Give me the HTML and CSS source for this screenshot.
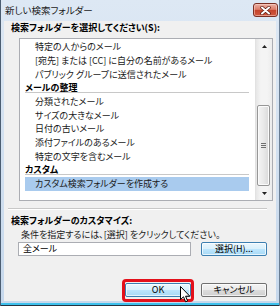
FILE: index.html
```html
<!DOCTYPE html>
<html lang="ja">
<head>
<meta charset="utf-8">
<link rel="stylesheet" href="styles.css">
</head>
<body>
<div class="window">
  <div class="titlebar">
    <span class="title">新しい検索フォルダー</span>
    <span class="close">
      <svg width="11" height="9" viewBox="0 0 11 9">
        <path d="M2 1.5 L9 7.5 M9 1.5 L2 7.5" stroke="#5a1a10" stroke-width="3.4" stroke-linecap="round"/>
        <path d="M2 1.5 L9 7.5 M9 1.5 L2 7.5" stroke="#ffffff" stroke-width="2" stroke-linecap="round"/>
      </svg>
    </span>
  </div>
  <div class="client">
    <div class="label">検索フォルダーを選択してください(S):</div>
    <div class="listbox">
      <ul class="rows">
        <li class="item">特定の人からのメール</li>
        <li class="item">[宛先] または [CC] に自分の名前があるメール</li>
        <li class="item">パブリック グループに送信されたメール</li>
        <li class="group">メールの整理</li>
        <li class="item">分類されたメール</li>
        <li class="item">サイズの大きなメール</li>
        <li class="item">日付の古いメール</li>
        <li class="item">添付ファイルのあるメール</li>
        <li class="item">特定の文字を含むメール</li>
        <li class="group">カスタム</li>
        <li class="item selected">カスタム検索フォルダーを作成する</li>
      </ul>
      <div class="scrollbar">
        <div class="arrow"><svg width="5" height="3" viewBox="0 0 5 3"><path d="M0 3 L2.5 0 L5 3 Z" fill="#222"/></svg></div>
        <div class="track">
          <div class="thumb">
            <span class="grip"></span>
          </div>
        </div>
        <div class="arrow"><svg width="5" height="3" viewBox="0 0 5 3"><path d="M0 0 L5 0 L2.5 3 Z" fill="#222"/></svg></div>
      </div>
    </div>
    <div class="separator"></div>
    <div class="label label2">検索フォルダーのカスタマイズ:</div>
    <div class="hint">条件を指定するには、[選択] をクリックしてください。</div>
    <div class="pick-row">
      <div class="input">全メール</div>
      <button class="btn hot">選択(H)...</button>
    </div>
    <div class="actions">
      <button class="btn hot">OK</button>
      <button class="btn">キャンセル</button>
    </div>
  </div>
  <div class="mark"></div>
  <svg class="cursor" width="12" height="17" viewBox="0 0 12 17">
    <path d="M0.5 0.5 L0.5 13.5 L3.5 10.8 L5.6 15.8 L7.6 15 L5.6 10.2 L9.8 10.2 Z" fill="#fff" stroke="#000" stroke-width="1" stroke-linejoin="round"/>
  </svg>
</div>
</body>
</html>
```

FILE: styles.css
```css
html, body {
  margin: 0;
  padding: 0;
}

body {
  width: 280px;
  height: 306px;
  overflow: hidden;
  background: #ffffff;
  font-family: "Noto Sans CJK JP", "Noto Sans", sans-serif;
  font-size: 9px;
  font-feature-settings: "palt";
  color: #000;
}

.window {
  position: relative;
  width: 280px;
  height: 306px;
  box-sizing: border-box;
  border-left: 1px solid #4c5e72;
  border-right: 1px solid #6a7d92;
  display: flex;
  flex-direction: column;
  background:
    linear-gradient(to top, #253442 0 1px, #3dc0ec 1px 3px, transparent 3px),
    linear-gradient(#dde8f4, #c6d8ec);
}

.titlebar {
  height: 21px;
  flex: none;
  display: flex;
  justify-content: space-between;
  align-items: flex-start;
  padding: 0 1px 0 4px;
}

.title {
  font-size: 9.5px;
  line-height: 21px;
  color: #1b1b1b;
}

.close {
  width: 25px;
  height: 14px;
  margin-top: 3px;
  box-sizing: border-box;
  border: 1px solid #7a2f24;
  border-radius: 3px;
  background: linear-gradient(#eab0a4 0%, #dc7d6a 45%, #c5432b 52%, #d0583f 100%);
  box-shadow: inset 0 0 0 1px rgba(255, 220, 210, 0.5);
  display: flex;
  align-items: center;
  justify-content: center;
}

.close svg {
  display: block;
}

.client {
  flex: 1;
  margin: 0 3px 5px 3px;
  background: #f0f0f0;
  display: flex;
  flex-direction: column;
}

.label {
  line-height: 14px;
  padding-left: 7px;
  font-weight: bold;
  white-space: nowrap;
}

.listbox {
  margin: 3px 3px 0 15px;
  height: 163px;
  box-sizing: border-box;
  border: 1px solid #abadb3;
  background: #fff;
  display: flex;
  flex: none;
}

.rows {
  flex: 1;
  list-style: none;
  margin: 0;
  padding: 1.15px 6px 0 5px;
  min-width: 0;
}

.rows li {
  height: 13.7px;
  line-height: 13.7px;
  white-space: nowrap;
  overflow: hidden;
}

.item {
  padding-left: 10px;
  color: #1a1a1a;
}

.group {
  font-weight: bold;
  background: linear-gradient(#c8c8c8, #c8c8c8) no-repeat 0 calc(100% - 2px) / 100% 1px;
}

.selected {
  background: #a9cbee;
}

.scrollbar {
  width: 17px;
  flex: none;
  display: flex;
  flex-direction: column;
  background: linear-gradient(to right, #e6e6e6, #f4f4f4 30%, #f4f4f4 70%, #ececec);
  border-left: 1px solid #e2e2e2;
  box-sizing: border-box;
}

.arrow {
  height: 14px;
  flex: none;
  display: flex;
  align-items: center;
  justify-content: center;
}

.arrow svg {
  display: block;
}

.track {
  flex: 1;
  display: flex;
  flex-direction: column;
}

.thumb {
  margin: 52px 2px 0 1px;
  flex: 1;
  box-sizing: border-box;
  border: 1px solid #979797;
  border-radius: 2px;
  background: linear-gradient(to right, #f4f4f4, #e9e9e9 50%, #d9d9d9);
  box-shadow: inset 0 0 0 1px #fbfbfb;
  display: flex;
  align-items: center;
  justify-content: center;
}

.grip {
  width: 5px;
  height: 5px;
  background: repeating-linear-gradient(#6f6f6f 0 1px, transparent 1px 2px);
}

.separator {
  margin: 7px 9px 0 4px;
  border-top: 1px solid #c8c8c8;
  border-bottom: 1px solid #ffffff;
}

.label2 {
  margin-top: 4px;
}

.hint {
  line-height: 13px;
  padding-left: 17px;
  white-space: nowrap;
  color: #1a1a1a;
}

.pick-row {
  margin-top: 1px;
  display: flex;
  gap: 10px;
  padding: 0 9px 0 14px;
}

.input {
  flex: 1;
  height: 14px;
  box-sizing: border-box;
  border: 1px solid #abadb3;
  background: #fff;
  padding-left: 4px;
  line-height: 12px;
}

.btn {
  width: 66px;
  height: 14px;
  padding: 0;
  box-sizing: border-box;
  font: inherit;
  line-height: 12px;
  color: #000;
  border: 1px solid #707070;
  border-radius: 2px;
  background: linear-gradient(#f3f3f3 0%, #ebebeb 50%, #dddddd 50%, #cfcfcf 100%);
  box-shadow: inset 0 0 0 1px rgba(255, 255, 255, 0.7);
}

.btn.hot {
  border-color: #3c7fb1;
  background: linear-gradient(#eaf6fd 0%, #d9f0fc 50%, #bee6fd 50%, #a7d9f5 100%);
}

.actions {
  margin-top: 27px;
  display: flex;
  justify-content: flex-end;
  gap: 10px;
  padding-right: 9px;
}

.mark {
  position: absolute;
  left: 121px;
  top: 279px;
  width: 72px;
  height: 23px;
  box-sizing: border-box;
  border: 3px solid #e3111b;
  border-radius: 4px;
}

.cursor {
  position: absolute;
  left: 179px;
  top: 286px;
}
```
